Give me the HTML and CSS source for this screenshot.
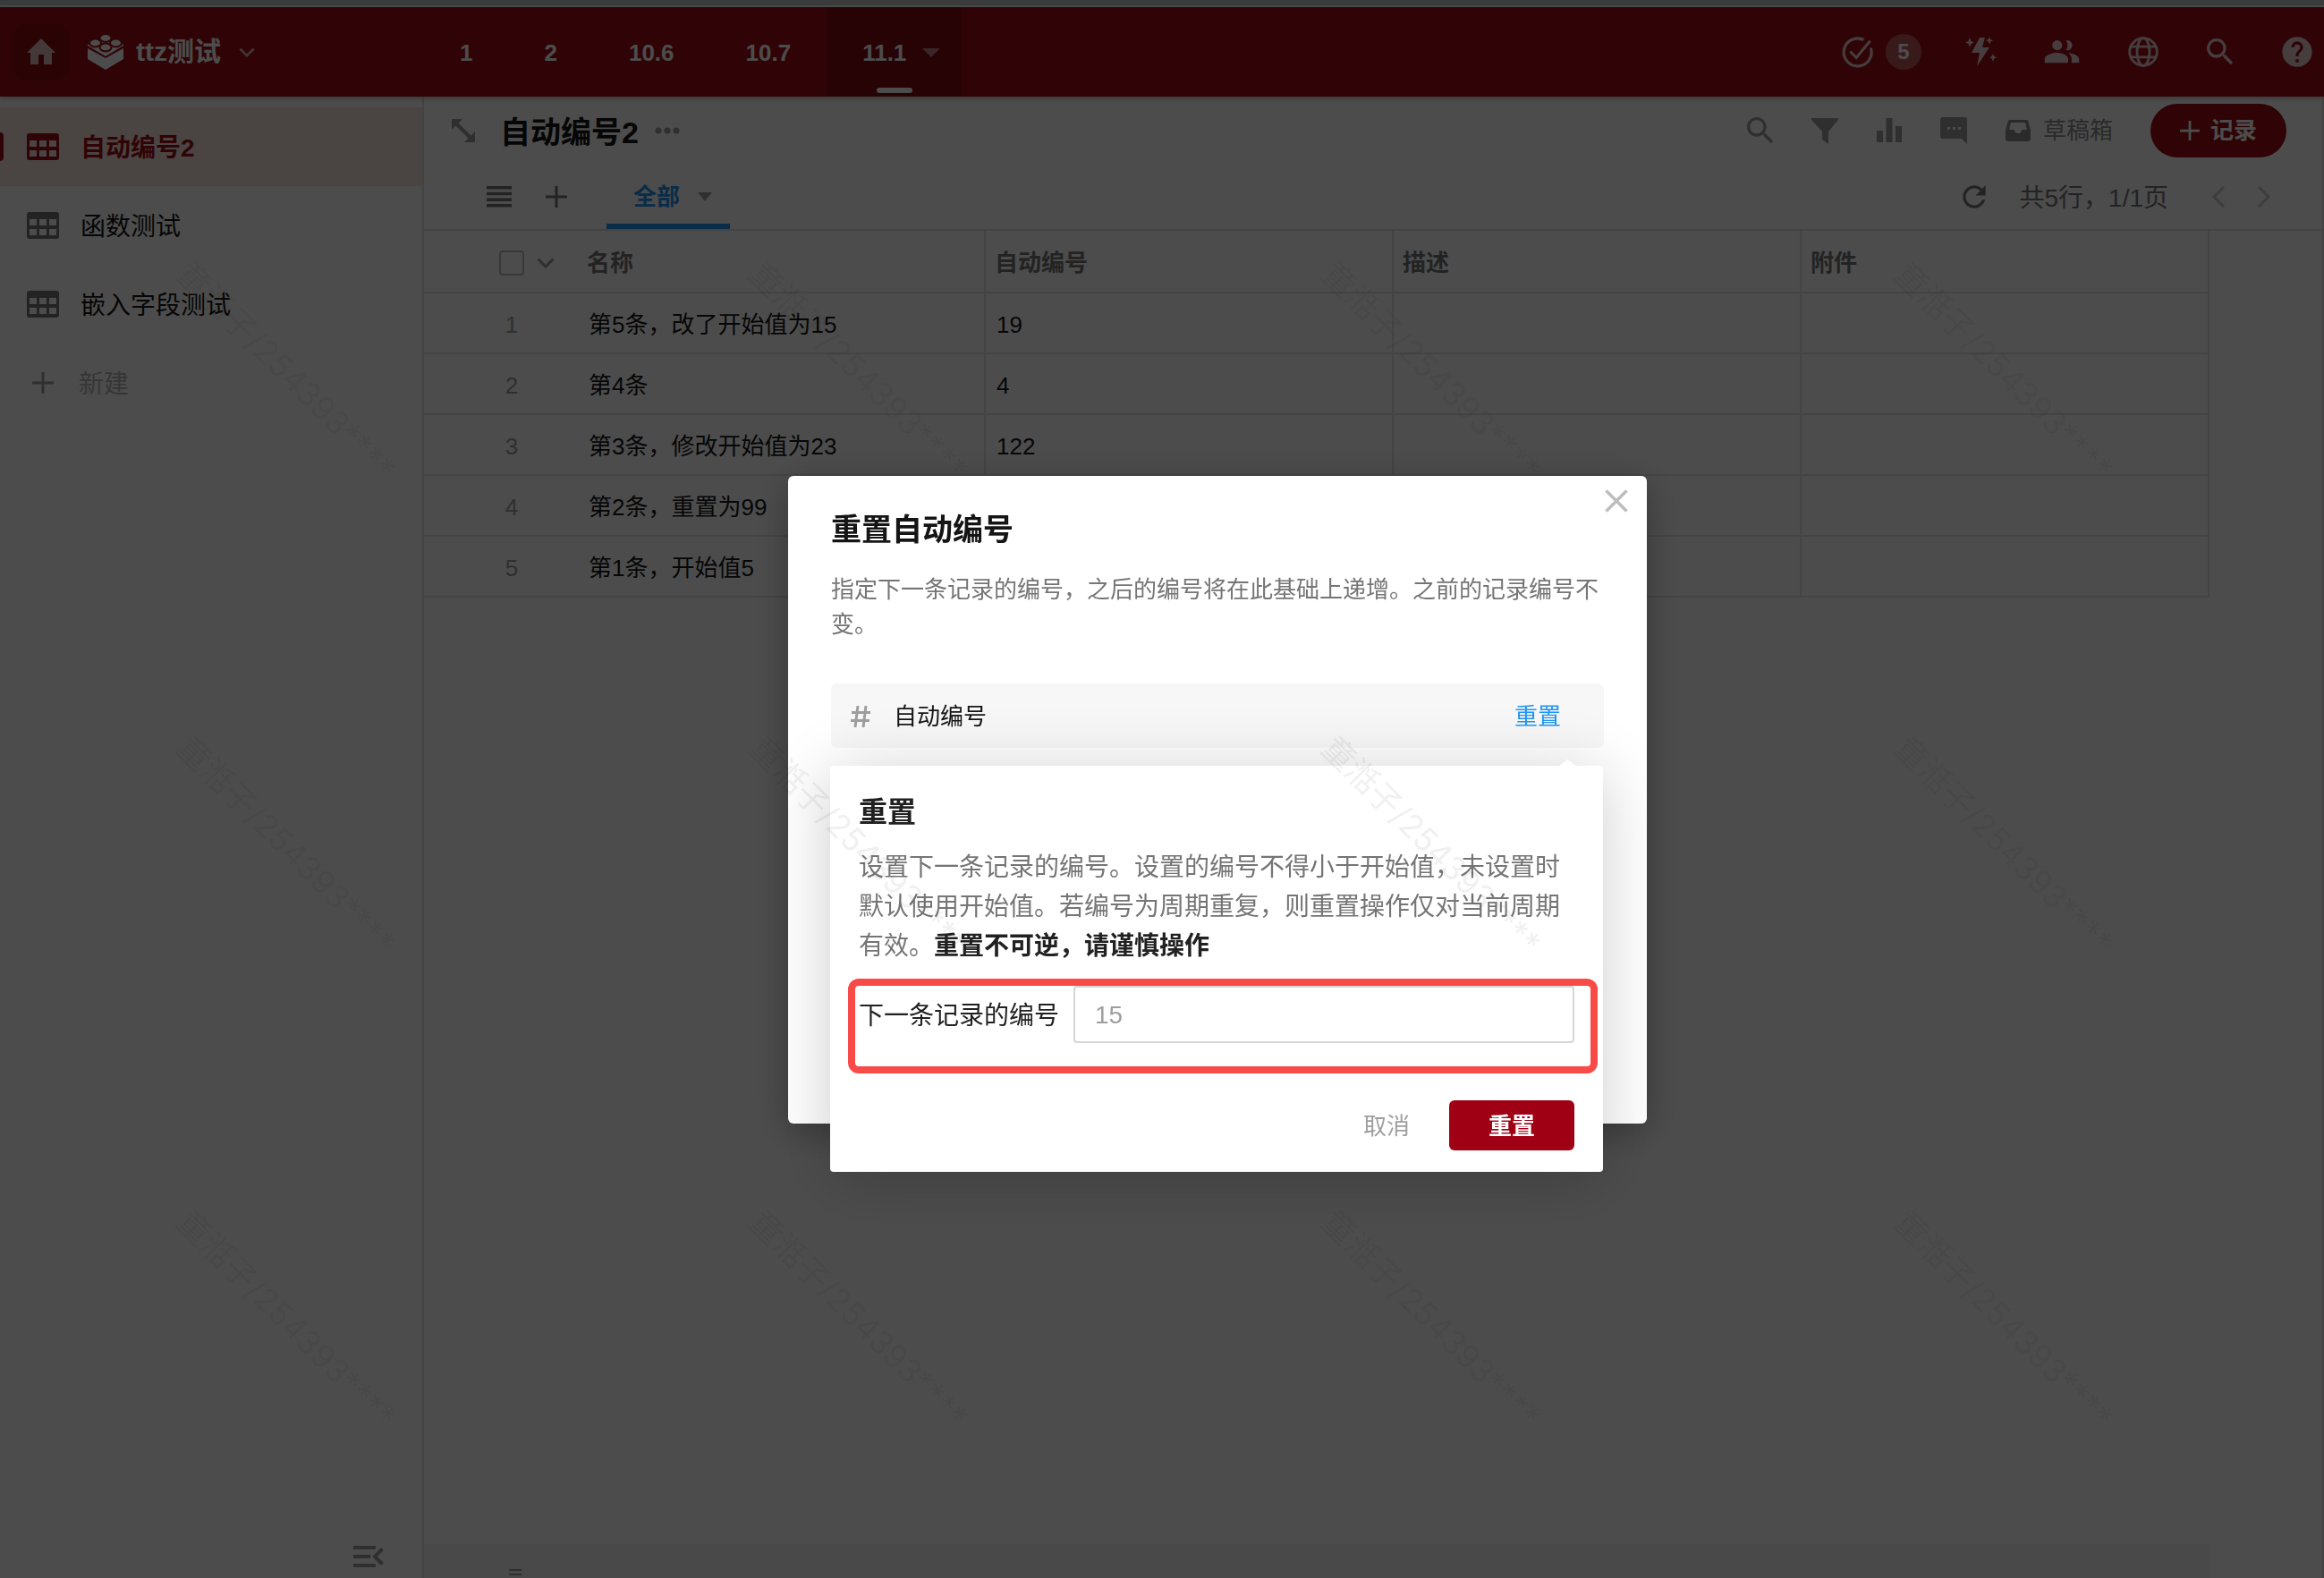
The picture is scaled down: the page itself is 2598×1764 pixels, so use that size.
FILE: index.html
```html
<!DOCTYPE html>
<html lang="zh-CN">
<head>
<meta charset="utf-8">
<meta name="viewport" content="width=device-width, initial-scale=1">
<title>自动编号2 - ttz测试</title>
<link rel="stylesheet" href="styles.css">
</head>
<body>
<svg class="sprite" aria-hidden="true">
  <symbol id="i-table" viewBox="0 0 36 30"><path fill-rule="evenodd" d="M3 0h30a3 3 0 0 1 3 3v24a3 3 0 0 1-3 3H3a3 3 0 0 1-3-3V3a3 3 0 0 1 3-3zM3 8v7h8V8zm11 0v7h8V8zm11 0v7h8V8zM3 19v7h8v-7zm11 0v7h8v-7zm11 0v7h8v-7z"/></symbol>
  <symbol id="i-plus" viewBox="0 0 24 24"><path d="M10.500 0h3v10.500H24v3H13.500V24h-3V13.500H0v-3h10.500z"/></symbol>
  <symbol id="i-down" viewBox="0 0 20 12"><path d="M1.500 1.500 10 10l8.500-8.500" fill="none" stroke="currentColor" stroke-width="3"/></symbol>
  <symbol id="i-caret" viewBox="0 0 20 10"><path d="M0 0h20L10 10z"/></symbol>
  <symbol id="i-search" viewBox="0 0 24 24"><path d="M15.500 14h-.79l-.28-.27A6.470 6.470 0 0 0 16 9.500 6.500 6.500 0 1 0 9.500 16c1.610 0 3.090-.59 4.230-1.570l.27.28v.79l5 4.990L20.490 19zm-6 0C7.010 14 5 11.990 5 9.500S7.010 5 9.500 5 14 7.010 14 9.500 11.990 14 9.500 14z"/></symbol>
</svg>

<div class="app">
  <header class="topbar">
    <div class="brand">
      <a class="home" href="#" aria-label="首页"><svg width="32" height="30" viewBox="0 0 32 30"><path d="M16 0 32 16h-4v13h-9V18h-6v11H4V16H0z"/></svg></a>
      <button class="app-name" type="button">
        <svg class="logo" width="40" height="40" viewBox="0 0 40 40"><path d="M0 16l20 11 20-11v12L20 40 0 28z"/><path d="M20 5 40 12v1L20 25 0 13v-1z"/><g class="studs"><ellipse cx="20" cy="4.500" rx="6.500" ry="4.500"/><ellipse cx="8.500" cy="10" rx="6.500" ry="4.500"/><ellipse cx="31.500" cy="10" rx="6.500" ry="4.500"/><ellipse cx="20" cy="15" rx="6.500" ry="4.500"/></g></svg>
        <span>ttz测试</span>
        <svg class="faded" width="18" height="11"><use href="#i-down"/></svg>
      </button>
    </div>
    <nav class="tabs">
      <a href="#">1</a><a href="#">2</a><a href="#">10.6</a><a href="#">10.7</a>
      <a class="current" href="#">11.1 <svg width="20" height="10"><use href="#i-caret"/></svg></a>
    </nav>
    <div class="tools">
      <button class="todo" type="button" aria-label="待办">
        <svg width="40" height="40" viewBox="0 0 24 24"><path d="M21.200 9.300A9.300 9.300 0 1 1 16.500 3.900M7.400 11.700l4.100 4.200L20.800 4.600" fill="none" stroke="currentColor" stroke-width="1.900"/></svg>
        <span class="badge">5</span>
      </button>
      <button type="button" aria-label="自动化"><svg width="40" height="40" viewBox="0 0 40 40"><path d="M19 4h6l-3 11h8L16 36l3-15h-9zM8 4l1.500 4L13 9.500 9.500 11 8 15l-1.500-4L3 9.500 6.500 8zM30 3l1.200 3 2.800 1.200L31.200 8.500 30 12l-1.200-3.500L26 7.200 28.800 6zM34 22l1.200 3 2.800 1.200-2.800 1.300L34 31l-1.200-3.500-2.800-1.300 2.800-1.200z"/></svg></button>
      <button class="people" type="button" aria-label="成员"><svg width="42" height="42" viewBox="0 0 24 24"><path d="M15.500 11a3.200 3.200 0 1 0-.9-6.300 5 5 0 0 1 0 6.200c.3.100.6.100.9.100zM9 11a3.200 3.200 0 1 0 0-6.400A3.200 3.200 0 0 0 9 11zm0 1.600c-2.700 0-8 1.300-8 4V19h15v-2.400c0-2.700-4.300-4-7-4zm7.200.100c1.100.9 2 2.200 2 3.900V19H23v-2.400c0-2.300-3.800-3.600-6.800-3.900z"/></svg></button>
      <button type="button" aria-label="语言"><svg width="40" height="40" viewBox="0 0 24 24"><g fill="none" stroke="currentColor" stroke-width="1.700"><circle cx="12" cy="12" r="9.200"/><ellipse cx="12" cy="12" rx="4.200" ry="9.200"/><path d="M3.700 8.500h16.600M3.700 15.500h16.600"/></g></svg></button>
      <button type="button" aria-label="搜索"><svg width="40" height="40"><use href="#i-search"/></svg></button>
      <button type="button" aria-label="帮助"><svg width="40" height="40" viewBox="0 0 24 24"><path d="M12 2a10 10 0 1 0 0 20 10 10 0 0 0 0-20zm1 17h-2v-2h2zm2.070-7.750-.9.920C13.450 12.900 13 13.500 13 15h-2v-.5c0-1.100.45-2.100 1.170-2.830l1.240-1.260c.37-.36.590-.86.590-1.410a2 2 0 1 0-4 0H8a4 4 0 1 1 8 0c0 .88-.36 1.680-.93 2.250z"/></svg></button>
    </div>
  </header>

  <div class="body">
    <aside class="sidebar">
      <nav class="sheets">
        <a class="sheet current" href="#"><svg width="36" height="30"><use href="#i-table"/></svg><span>自动编号2</span></a>
        <a class="sheet" href="#"><svg width="36" height="30"><use href="#i-table"/></svg><span>函数测试</span></a>
        <a class="sheet" href="#"><svg width="36" height="30"><use href="#i-table"/></svg><span>嵌入字段测试</span></a>
        <button class="sheet new" type="button"><svg width="36" height="24"><use href="#i-plus"/></svg><span>新建</span></button>
      </nav>
      <button class="collapse" type="button" aria-label="收起"><svg width="34" height="24" viewBox="0 0 34 24"><path d="M0 0h25v4H0zM0 10h19v4H0zM0 20h25v4H0z"/><path d="M32.500 3.500 24 12l8.500 8.500" fill="none" stroke="currentColor" stroke-width="4"/></svg></button>
    </aside>

    <main class="main">
      <div class="title-row">
        <button type="button" aria-label="展开"><svg width="26" height="26" viewBox="0 0 26 26"><path d="M0 0h12L7.500 4.500l14 14L26 14v12H14l4.500-4.500-14-14L0 12z"/></svg></button>
        <h1>自动编号2</h1>
        <button class="more" type="button" aria-label="更多"><svg width="28" height="8" viewBox="0 0 28 8"><circle cx="4" cy="4" r="3.500"/><circle cx="14" cy="4" r="3.500"/><circle cx="24" cy="4" r="3.500"/></svg></button>
        <div class="actions">
          <button type="button" aria-label="搜索"><svg width="40" height="40"><use href="#i-search"/></svg></button>
          <button type="button" aria-label="筛选"><svg width="30" height="30" viewBox="0 0 30 30"><path d="M1 1h28a1 1 0 0 1 1 2L19 16v14l-7-5v-9L0 3a1 1 0 0 1 1-2z"/></svg></button>
          <button type="button" aria-label="统计"><svg width="28" height="28" viewBox="0 0 28 28"><path d="M0 14h7v13H0zM10.500 0h7v27h-7zM21 9h7v18h-7z"/></svg></button>
          <button type="button" aria-label="讨论"><svg width="30" height="30" viewBox="0 0 30 30"><path fill-rule="evenodd" d="M3 0h24a3 3 0 0 1 3 3v27l-6-6H3a3 3 0 0 1-3-3V3a3 3 0 0 1 3-3zm5 11v3h3v-3zm6 0v3h3v-3zm6 0v3h3v-3z"/></svg></button>
          <button class="draft" type="button"><span class="slot"><svg width="28" height="24" viewBox="0 0 28 24"><path fill-rule="evenodd" d="M5 0h18a2 2 0 0 1 2 1l3 10v10a3 3 0 0 1-3 3H3a3 3 0 0 1-3-3V11L3 1a2 2 0 0 1 2-1zm1 3L4 11h6a4 4 0 0 0 8 0h6l-2-8z"/></svg></span>草稿箱</button>
          <button class="add" type="button"><svg width="22" height="22"><use href="#i-plus"/></svg>记录</button>
        </div>
      </div>

      <div class="view-row">
        <button type="button" aria-label="视图列表"><svg width="28" height="24" viewBox="0 0 28 24"><path d="M0 0h28v3.500H0zM0 6.700h28v3.500H0zM0 13.400h28v3.500H0zM0 20.100h28v3.500H0z"/></svg></button>
        <button type="button" aria-label="添加视图"><svg width="24" height="24"><use href="#i-plus"/></svg></button>
        <a class="view current" href="#">全部 <svg width="16" height="10" viewBox="0 0 16 10"><path d="M0 0h16L8 10z"/></svg></a>
        <div class="pager">
          <button type="button" aria-label="刷新"><svg width="38" height="38" viewBox="0 0 24 24"><path d="M17.650 6.350A8 8 0 1 0 19.730 14h-2.080A6 6 0 1 1 12 6c1.660 0 3.140.69 4.220 1.780L13 11h7V4z"/></svg></button>
          <span>共5行，1/1页</span>
          <div class="arrows">
            <button type="button" aria-label="上一页"><svg width="24" height="24" viewBox="0 0 24 24"><path d="M18 1 7 12l11 11" fill="none" stroke="currentColor" stroke-width="3"/></svg></button>
            <button type="button" aria-label="下一页"><svg width="24" height="24" viewBox="0 0 24 24"><path d="M6 1l11 11L6 23" fill="none" stroke="currentColor" stroke-width="3"/></svg></button>
          </div>
        </div>
      </div>

      <table class="grid">
        <colgroup><col class="col-select"><col class="col-data"><col class="col-data"><col class="col-data"><col class="col-data"></colgroup>
        <thead>
          <tr><th class="select"><div class="select-all"><input type="checkbox" aria-label="全选"><svg width="20" height="12"><use href="#i-down"/></svg></div></th><th>名称</th><th>自动编号</th><th>描述</th><th>附件</th></tr>
        </thead>
        <tbody>
          <tr><td class="select"><span>1</span></td><td>第5条，改了开始值为15</td><td>19</td><td></td><td></td></tr>
          <tr><td class="select"><span>2</span></td><td>第4条</td><td>4</td><td></td><td></td></tr>
          <tr><td class="select"><span>3</span></td><td>第3条，修改开始值为23</td><td>122</td><td></td><td></td></tr>
          <tr><td class="select"><span>4</span></td><td>第2条，重置为99</td><td></td><td></td><td></td></tr>
          <tr><td class="select"><span>5</span></td><td>第1条，开始值5</td><td></td><td></td><td></td></tr>
        </tbody>
      </table>
      <div class="summary"><svg width="14" height="8" viewBox="0 0 14 8"><path d="M0 0h14v2H0zM0 5h14v2H0z"/></svg></div>
    </main>
  </div>
</div>

<div class="backdrop">
  <section class="modal" role="dialog" aria-modal="true" aria-labelledby="modal-title">
    <button class="close" type="button" aria-label="关闭"><svg width="26" height="26" viewBox="0 0 26 26"><path d="M1.500 1.500l23 23M24.500 1.500l-23 23" fill="none" stroke="currentColor" stroke-width="3.500"/></svg></button>
    <h2 id="modal-title">重置自动编号</h2>
    <p class="hint">指定下一条记录的编号，之后的编号将在此基础上递增。之前的记录编号不变。</p>
    <div class="field">
      <svg class="hash" width="22" height="24" viewBox="0 0 22 24"><path d="M8 0 5 24M17 0l-3 24M1 7.500h21M0 16.500h21" fill="none" stroke="currentColor" stroke-width="3"/></svg>
      <span class="field-name">自动编号</span>
      <a href="#">重置</a>
      <form class="popover">
        <h3>重置</h3>
        <p>设置下一条记录的编号。设置的编号不得小于开始值，未设置时默认使用开始值。若编号为周期重复，则重置操作仅对当前周期有效。<strong>重置不可逆，请谨慎操作</strong></p>
        <div class="number">
          <label for="next-number">下一条记录的编号</label>
          <input id="next-number" type="text" placeholder="15">
        </div>
        <div class="buttons">
          <button class="cancel" type="button">取消</button>
          <button class="confirm" type="submit">重置</button>
        </div>
      </form>
    </div>
  </section>
</div>

<div class="watermark" aria-hidden="true">
  <span>童湉子/254393****</span><span>童湉子/254393****</span><span>童湉子/254393****</span><span>童湉子/254393****</span>
  <span>童湉子/254393****</span><span>童湉子/254393****</span><span>童湉子/254393****</span><span>童湉子/254393****</span>
  <span>童湉子/254393****</span><span>童湉子/254393****</span><span>童湉子/254393****</span><span>童湉子/254393****</span>
</div>
</body>
</html>
```
FILE: styles.css
```css
:root {
  --brand: #a00014;
  --bar: #a01014;
  --blue: #2196f3;
  --ink: #151515;
  --muted: #757575;
  --soft: #9e9e9e;
  --line: #e0e0e0;
}

* { box-sizing: border-box; }

body {
  margin: 0;
  background: #fff;
  color: var(--ink);
  font: 26px/40px "Liberation Sans", "Noto Sans CJK SC", sans-serif;
}

h1, h2, h3, p { margin: 0; }

a { color: inherit; text-decoration: none; }

button {
  display: flex;
  align-items: center;
  justify-content: center;
  margin: 0;
  padding: 0;
  border: 0;
  background: none;
  color: inherit;
  font: inherit;
}

svg { display: block; flex: none; fill: currentColor; }

.sprite { position: absolute; width: 0; height: 0; }

.app {
  display: flex;
  flex-direction: column;
  min-height: 100vh;
  border-top: 6px solid #c4c6c8;
  padding-top: 2px;
}

/* Top bar */
.topbar {
  display: flex;
  height: 100px;
  background: var(--bar);
  color: #fff;
  box-shadow: 0 2px 6px rgba(0, 0, 0, .25);
  z-index: 1;
}

.brand {
  display: flex;
  align-items: center;
  gap: 20px;
  width: 474px;
  padding-left: 14px;
}

.home {
  display: flex;
  align-items: center;
  justify-content: center;
  width: 64px;
  height: 64px;
  border-radius: 16px;
  background: rgba(0, 0, 0, .12);
  color: #e4bcc0;
}

.app-name { gap: 14px; font-size: 30px; font-weight: 700; }
.app-name .faded { margin-left: 6px; color: #dcaeb2; }
.studs { stroke: var(--bar); stroke-width: 2; }

.tabs { display: flex; font-weight: 700; }

.tabs a {
  display: flex;
  align-items: center;
  padding: 2px 40px 0;
}

.tabs .current {
  position: relative;
  gap: 18px;
  padding-right: 24px;
  background: rgba(0, 0, 0, .15);
}

.tabs .current svg { color: #c48088; }

.tabs .current::after {
  content: "";
  position: absolute;
  bottom: 4px;
  left: 50%;
  width: 40px;
  height: 6px;
  margin-left: -20px;
  border-radius: 3px;
  background: #fff;
}

.tools {
  display: flex;
  align-items: center;
  gap: 46px;
  margin-left: auto;
  padding-right: 10px;
  color: #e8ccd0;
}

.todo { gap: 12px; }
.people { width: 50px; }

.badge {
  width: 40px;
  height: 40px;
  border-radius: 50%;
  background: rgba(255, 255, 255, .3);
  color: #fff;
  font-size: 24px;
  font-weight: 700;
}

/* Sidebar */
.body { display: flex; flex: 1; }

.sidebar {
  display: flex;
  flex-direction: column;
  justify-content: space-between;
  flex: none;
  width: 474px;
  padding: 12px 0;
  border-right: 2px solid var(--line);
}

.sheet {
  position: relative;
  display: flex;
  align-items: center;
  justify-content: flex-start;
  gap: 24px;
  width: 100%;
  height: 88px;
  padding-left: 30px;
  font-size: 28px;
}

.sheet span { padding-top: 3px; }
.sheet svg { color: var(--muted); }
.sheet.new { gap: 22px; color: #b5b5b5; }
.sheet.new svg { color: var(--soft); }

.sheet.current {
  background: #f7e4e0;
  color: var(--bar);
  font-weight: 700;
}

.sheet.current svg { color: inherit; }

.sheet.current::before {
  content: "";
  position: absolute;
  left: 0;
  width: 4px;
  height: 32px;
  border-radius: 0 4px 4px 0;
  background: var(--bar);
}

.collapse { align-self: flex-end; margin-right: 43px; color: var(--soft); }

/* Sheet header */
.main {
  display: flex;
  flex-direction: column;
  flex: 1;
  min-width: 0;
  border-right: 2px solid var(--line);
}

.title-row {
  display: flex;
  align-items: center;
  height: 76px;
  padding: 0 40px 0 31px;
  color: var(--soft);
}

.title-row h1 {
  margin: 0 18px 0 28px;
  padding-top: 3px;
  color: var(--ink);
  font-size: 34px;
}

.actions {
  display: flex;
  align-items: center;
  gap: 36px;
  margin-left: auto;
}

.actions > button:not(.draft, .add), .slot {
  display: flex;
  justify-content: center;
  width: 36px;
}

.actions .draft { gap: 10px; margin-right: 6px; color: #8c8c8c; }

.actions .add {
  gap: 12px;
  width: 152px;
  height: 60px;
  border-radius: 30px;
  background: var(--bar);
  color: #fff;
  font-weight: 700;
}

.view-row {
  display: flex;
  align-items: center;
  height: 74px;
  padding: 0 53px 0 70px;
  border-bottom: 2px solid var(--line);
  color: var(--muted);
}

.view-row > button { margin-right: 38px; }

.view {
  display: flex;
  align-items: center;
  align-self: stretch;
  gap: 20px;
  margin-left: 6px;
  padding: 6px 20px 0 30px;
  border-bottom: 6px solid var(--blue);
  color: var(--blue);
  font-weight: 700;
}

.view svg { color: var(--soft); }

.pager {
  display: flex;
  align-items: center;
  gap: 32px;
  margin-left: auto;
  font-size: 28px;
}

.pager span { padding-top: 4px; }

.arrows { display: flex; gap: 27px; margin-left: 12px; color: #ccc; }

/* Data grid */
.grid {
  width: 1996px;
  table-layout: fixed;
  border-spacing: 0;
}

.col-select { width: 172px; }
.col-data { width: 456px; }

.grid th, .grid td {
  height: 68px;
  padding: 3px 12px 0;
  border: solid #e4e4e4;
  border-width: 0 2px 2px 0;
  text-align: left;
}

.grid th {
  height: 70px;
  padding: 4px 10px 0;
  border-bottom-color: var(--line);
  color: var(--muted);
  font-weight: 700;
}

.grid .select {
  padding-left: 84px;
  padding-right: 0;
  border-right-width: 0;
  color: var(--soft);
}

.grid .select span { display: block; width: 28px; text-align: center; }

.select-all { display: flex; align-items: center; gap: 14px; color: var(--soft); }

.select-all input {
  appearance: none;
  width: 28px;
  height: 28px;
  margin: 0;
  border: 2px solid #bdbdbd;
  border-radius: 4px;
}

.summary {
  width: 1996px;
  height: 38px;
  margin-top: auto;
  padding: 28px 0 0 95px;
  background: #f5f5f5;
  color: var(--soft);
}

/* Dialog */
.backdrop {
  position: fixed;
  inset: 0;
  z-index: 2;
  display: flex;
  align-items: center;
  justify-content: center;
  padding: 24px 0 0 124px;
  background: rgba(0, 0, 0, .7);
}

.modal {
  position: relative;
  width: 960px;
  min-height: 724px;
  padding: 36px 48px;
  border-radius: 6px;
  background: #fff;
  box-shadow: 0 8px 40px rgba(0, 0, 0, .3);
}

.close {
  position: absolute;
  top: 15px;
  right: 21px;
  color: #bdbdbd;
}

.modal h2 { font-size: 34px; line-height: 48px; }

.hint {
  margin: 24px 0 46px;
  color: var(--muted);
  line-height: 39px;
}

.field {
  position: relative;
  display: flex;
  align-items: center;
  height: 72px;
  padding: 2px 48px 0 22px;
  border-radius: 6px;
  background: #f7f7f7;
}

.hash { color: var(--soft); }
.field-name { flex: 1; margin-left: 26px; }
.field > a { color: var(--blue); }

.popover {
  position: absolute;
  top: 92px;
  left: -1px;
  right: 1px;
  padding: 32px 32px 24px;
  border-radius: 4px;
  background: #fff;
  box-shadow: 0 8px 72px rgba(0, 0, 0, .2);
  color: #212121;
  font-size: 28px;
}

.popover::before {
  content: "";
  position: absolute;
  top: -7px;
  right: 31px;
  border: solid transparent;
  border-width: 0 9px 7px;
  border-bottom-color: #fff;
}

.popover h3 { font-size: 32px; }

.popover p {
  margin: 20px 0 22px;
  color: var(--muted);
  line-height: 44px;
}

.popover strong { color: #212121; }

.number {
  position: relative;
  display: flex;
  align-items: center;
  gap: 16px;
}

.number label { padding-top: 3px; }

/* Outline that marks the setting */
.number::after {
  content: "";
  position: absolute;
  inset: -8px -26px -34px -12px;
  border: 8px solid #f84a46;
  border-radius: 12px;
  pointer-events: none;
}

.number input {
  flex: 1;
  min-width: 0;
  height: 64px;
  padding: 2px 22px 0;
  border: 2px solid #d6d6d6;
  border-radius: 4px;
  background: #fff;
  color: inherit;
  font: inherit;
}

.number input::placeholder { color: var(--soft); }

.buttons {
  display: flex;
  justify-content: flex-end;
  gap: 44px;
  margin-top: 64px;
  font-size: 26px;
}

.buttons button { padding-top: 2px; }

.cancel { color: var(--soft); }

.confirm {
  width: 140px;
  height: 56px;
  border-radius: 6px;
  background: var(--brand);
  color: #fff;
  font-weight: 700;
}

/* Diagonal watermark over the whole page */
.watermark {
  position: fixed;
  top: 150px;
  left: 0;
  z-index: 3;
  display: grid;
  grid-template-columns: repeat(4, 640px);
  grid-auto-rows: 530px;
  place-items: center;
  color: rgba(0, 0, 0, .06);
  font: 400 36px/44px Inter, "Noto Sans CJK SC", sans-serif;
  pointer-events: none;
}

.watermark span { rotate: 45deg; white-space: nowrap; }
```
